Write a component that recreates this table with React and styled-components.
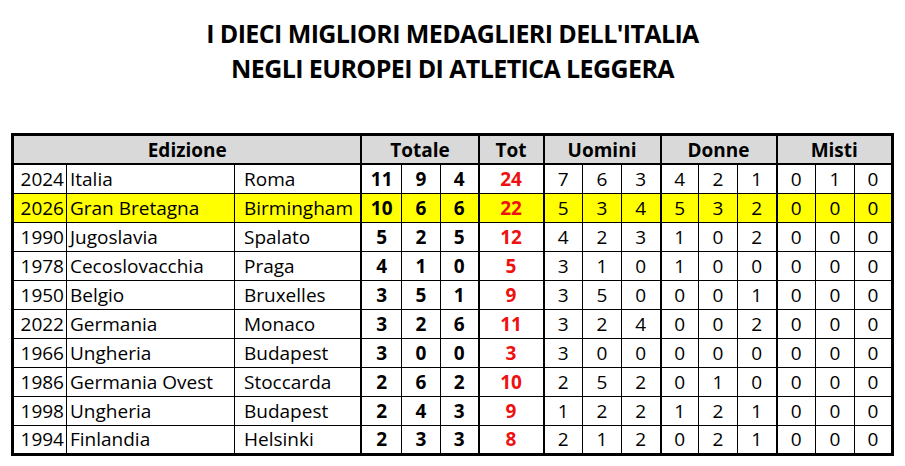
import styled, { createGlobalStyle } from 'styled-components'

const GlobalStyle = createGlobalStyle`
  body {
    margin: 0;
    background: #ffffff;
    font-family: "Open Sans", "Liberation Sans", sans-serif;
    color: #000;
  }
`;

const rows = [
  ['2024', 'Italia', 'Roma', [11, 9, 4], 24, [7, 6, 3], [4, 2, 1], [0, 1, 0]],
  ['2026', 'Gran Bretagna', 'Birmingham', [10, 6, 6], 22, [5, 3, 4], [5, 3, 2], [0, 0, 0], true],
  ['1990', 'Jugoslavia', 'Spalato', [5, 2, 5], 12, [4, 2, 3], [1, 0, 2], [0, 0, 0]],
  ['1978', 'Cecoslovacchia', 'Praga', [4, 1, 0], 5, [3, 1, 0], [1, 0, 0], [0, 0, 0]],
  ['1950', 'Belgio', 'Bruxelles', [3, 5, 1], 9, [3, 5, 0], [0, 0, 1], [0, 0, 0]],
  ['2022', 'Germania', 'Monaco', [3, 2, 6], 11, [3, 2, 4], [0, 0, 2], [0, 0, 0]],
  ['1966', 'Ungheria', 'Budapest', [3, 0, 0], 3, [3, 0, 0], [0, 0, 0], [0, 0, 0]],
  ['1986', 'Germania Ovest', 'Stoccarda', [2, 6, 2], 10, [2, 5, 2], [0, 1, 0], [0, 0, 0]],
  ['1998', 'Ungheria', 'Budapest', [2, 4, 3], 9, [1, 2, 2], [1, 2, 1], [0, 0, 0]],
  ['1994', 'Finlandia', 'Helsinki', [2, 3, 3], 8, [2, 1, 2], [0, 2, 1], [0, 0, 0]],
];

const widths = [54, 168, 127, 40, 39, 38, 65, 39, 39, 39, 38, 39, 39, 39, 39, 38];

export default function App() {
  return (
    <>
      <GlobalStyle />
      <Page>
        <Title>
          <TitleLine>I DIECI MIGLIORI MEDAGLIERI DELL'ITALIA</TitleLine>
          <TitleLine>NEGLI EUROPEI DI ATLETICA LEGGERA</TitleLine>
        </Title>
        <Table>
          <colgroup>
            {widths.map((w, i) => (
              <col key={i} style={{ width: w }} />
            ))}
          </colgroup>
          <thead>
            <tr>
              <HeadCell colSpan={3}>Edizione</HeadCell>
              <HeadCell colSpan={3}>Totale</HeadCell>
              <HeadCell>Tot</HeadCell>
              <HeadCell colSpan={3}>Uomini</HeadCell>
              <HeadCell colSpan={3}>Donne</HeadCell>
              <HeadCell colSpan={3}>Misti</HeadCell>
            </tr>
          </thead>
          <tbody>
            {rows.map(([year, nation, city, tot3, tot, men, women, mixed, hl]) => (
              <Row key={year + nation} $highlight={hl}>
                <Year>{year}</Year>
                <Nation>{nation}</Nation>
                <City>{city}</City>
                {tot3.map((n, i) => (
                  <Num key={'t' + i} $bold $group={i === 0}>{n}</Num>
                ))}
                <Num $bold $red $group>{tot}</Num>
                {men.map((n, i) => (
                  <Num key={'m' + i} $group={i === 0}>{n}</Num>
                ))}
                {women.map((n, i) => (
                  <Num key={'w' + i} $group={i === 0}>{n}</Num>
                ))}
                {mixed.map((n, i) => (
                  <Num key={'x' + i} $group={i === 0}>{n}</Num>
                ))}
              </Row>
            ))}
          </tbody>
        </Table>
      </Page>
    </>
  );
}

const Page = styled.div`
  display: flex;
  flex-direction: column;
  align-items: center;
  padding-top: 16px;
`;

const Title = styled.div`
  display: flex;
  flex-direction: column;
  align-items: center;
  margin-bottom: 47px;
`;

const TitleLine = styled.div`
  font-size: 25px;
  font-weight: 700;
  line-height: 35px;
  letter-spacing: -0.6px;
`;

const Table = styled.table`
  border-collapse: collapse;
  table-layout: fixed;
  width: 880px;
  border: 3px solid #000;
  font-size: 19px;
`;

const HeadCell = styled.th`
  background: #d9d9d9;
  height: 27px;
  padding: 0;
  font-weight: 700;
  text-align: center;
  border: 2px solid #000;
  border-bottom-width: 2px;
`;

const Row = styled.tr`
  background: ${(p) => (p.$highlight ? '#ffff00' : '#ffffff')};
  height: 29px;
`;

const Cell = styled.td`
  padding: 0;
  border: 1px solid #000;
  white-space: nowrap;
  overflow: hidden;
  line-height: 26px;
`;

const Year = styled(Cell)`
  text-align: right;
  padding-right: 2px;
`;

const Nation = styled(Cell)`
  padding-left: 3px;
`;

const City = styled(Cell)`
  padding-left: 9px;
`;

const Num = styled(Cell)`
  text-align: center;
  font-weight: ${(p) => (p.$bold ? 700 : 400)};
  color: ${(p) => (p.$red ? '#ee1111' : '#000')};
  border-left-width: ${(p) => (p.$group ? '2px' : '1px')};
`;
